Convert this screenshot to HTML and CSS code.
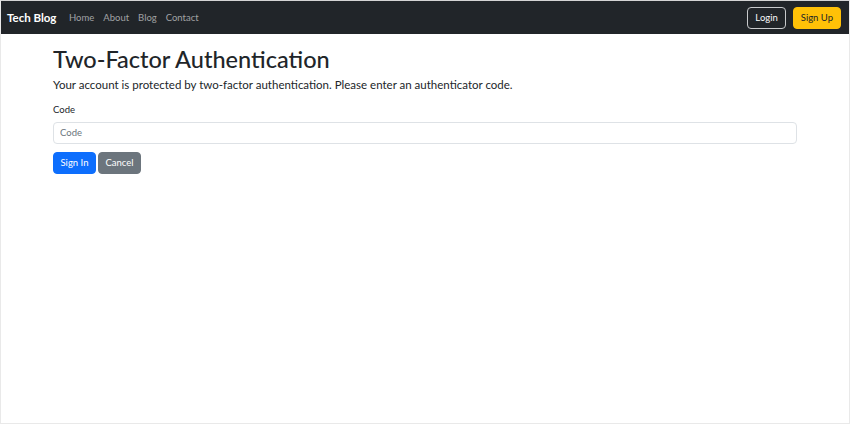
FILE: index.html
```html
<!DOCTYPE html>
<html lang="en">
<head>
<meta charset="utf-8">
<title>Two-Factor Authentication - Tech Blog</title>
<link rel="stylesheet" href="styles.css">
</head>
<body>
<div class="page">
  <nav class="navbar">
    <a class="brand" href="#">Tech Blog</a>
    <ul class="nav-links">
      <li><a href="#">Home</a></li>
      <li><a href="#">About</a></li>
      <li><a href="#">Blog</a></li>
      <li><a href="#">Contact</a></li>
    </ul>
    <div class="nav-actions">
      <a class="btn btn-outline-light" href="#">Login</a>
      <a class="btn btn-warning" href="#">Sign Up</a>
    </div>
  </nav>
  <main class="container">
    <h1 class="title">Two-Factor Authentication</h1>
    <p class="lead">Your account is protected by two-factor authentication. Please enter an authenticator code.</p>
    <form class="form">
      <label class="label" for="code">Code</label>
      <input class="input" id="code" type="text" placeholder="Code">
      <div class="actions">
        <button class="btn btn-primary" type="button">Sign In</button>
        <button class="btn btn-secondary" type="button">Cancel</button>
      </div>
    </form>
  </main>
</div>
</body>
</html>
```
FILE: styles.css
```css
* { box-sizing: border-box; }
html, body { margin: 0; padding: 0; }
body {
  font-family: Lato, "Open Sans", sans-serif;
  color: #212529;
  background: #fff;
}
.page {
  width: 850px;
  height: 424px;
  border: 1px solid #e9e9e9;
  border-top-color: #d4d4d4;
}
.navbar {
  height: 33px;
  background: #212529;
  display: flex;
  align-items: center;
  padding: 0 8px 0 6px;
}
.brand {
  color: #fff;
  text-decoration: none;
  font-size: 11.5px;
  font-weight: 700;
  margin-right: 8px;
}
.nav-links {
  list-style: none;
  margin: 0;
  padding: 0;
  display: flex;
}
.nav-links a {
  display: block;
  color: rgba(255,255,255,.58);
  text-decoration: none;
  font-size: 9.5px;
  padding: 0 4.5px;
}
.nav-actions {
  margin-left: auto;
  display: flex;
  gap: 7px;
}
.btn {
  display: inline-flex;
  align-items: center;
  justify-content: center;
  height: 22px;
  padding: 0 6.5px;
  font-family: inherit;
  font-size: 9.5px;
  border-radius: 4px;
  border: 1px solid transparent;
  text-decoration: none;
  cursor: pointer;
}
.nav-actions .btn { padding: 0 7px; }
.btn-outline-light { color: #f8f9fa; border-color: #c8cacc; }
.btn-warning { background: #ffc107; border-color: #ffc107; color: #212529; }
.btn-primary { background: #0d6efd; border-color: #0d6efd; color: #fff; }
.btn-secondary { background: #6c757d; border-color: #6c757d; color: #fff; }
.container {
  max-width: 744px;
  margin: 0 auto;
}
.title {
  font-size: 23.5px;
  font-weight: 500;
  line-height: 1.2;
  margin: 11px 0 3px;
}
.lead {
  font-size: 11.5px;
  margin: 0 0 10px;
  line-height: 1.5;
}
.form { display: flex; flex-direction: column; }
.label {
  font-size: 9.5px;
  line-height: 1.5;
  margin-bottom: 4px;
}
.input {
  height: 22px;
  width: 100%;
  border: 1px solid #dee2e6;
  border-radius: 4px;
  padding: 0 6px;
  font-family: inherit;
  font-size: 9.5px;
  color: #212529;
}
.input::placeholder { color: #6c757d; }
.actions {
  display: flex;
  gap: 2px;
  margin-top: 8px;
}
```
